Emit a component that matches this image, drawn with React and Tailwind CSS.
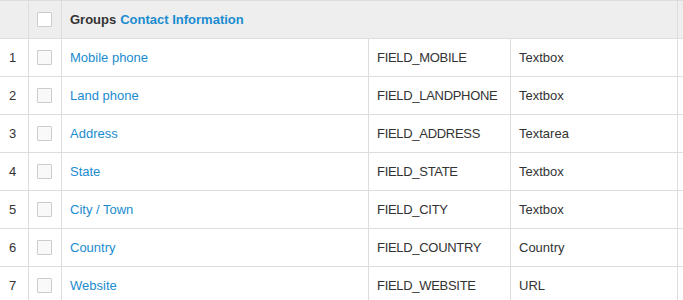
import React from 'react'

const rows = [
  { n: 1, name: 'Mobile phone', field: 'FIELD_MOBILE', type: 'Textbox' },
  { n: 2, name: 'Land phone', field: 'FIELD_LANDPHONE', type: 'Textbox' },
  { n: 3, name: 'Address', field: 'FIELD_ADDRESS', type: 'Textarea' },
  { n: 4, name: 'State', field: 'FIELD_STATE', type: 'Textbox' },
  { n: 5, name: 'City / Town', field: 'FIELD_CITY', type: 'Textbox' },
  { n: 6, name: 'Country', field: 'FIELD_COUNTRY', type: 'Country' },
  { n: 7, name: 'Website', field: 'FIELD_WEBSITE', type: 'URL' },
]

const cols = 'grid grid-cols-[29px_33px_307px_142px_167px_120px]'
const cell = 'border-r border-[#dddddd] flex items-center'

const Checkbox = ({ header }) => (
  <span
    className={`block w-[15px] h-[15px] border border-[#cccccc] rounded-[1px] ${
      header ? 'bg-white' : 'bg-[#f9f9f9]'
    }`}
  />
)

export default function App() {
  return (
    <div className="w-[683px] h-[300px] overflow-hidden bg-white font-['Liberation_Sans',Arial,sans-serif] text-[13px] text-[#333333]">
      <div className="w-[800px]">
        <div className={`${cols} h-[39px] bg-[#eeeeee] border-t border-b border-[#dddddd]`}>
          <div className={cell} />
          <div className={`${cell} pl-[8px]`}>
            <Checkbox header />
          </div>
          <div className={`${cell} col-span-3 pl-[8px] font-bold`}>
            <span>Groups</span>
            <a className="ml-[4px] text-[#1a8cd0]">Contact Information</a>
          </div>
          <div className={cell} />
        </div>
        {rows.map((r) => (
          <div key={r.n} className={`${cols} h-[38px] border-b border-[#dddddd]`}>
            <div className={`${cell} pl-[9px]`}>{r.n}</div>
            <div className={`${cell} pl-[8px]`}>
              <Checkbox />
            </div>
            <div className={`${cell} pl-[8px]`}>
              <a className="text-[#1a8cd0]">{r.name}</a>
            </div>
            <div className={`${cell} pl-[8px] tracking-[-0.3px]`}>{r.field}</div>
            <div className={`${cell} pl-[8px]`}>{r.type}</div>
            <div className={cell} />
          </div>
        ))}
      </div>
    </div>
  )
}
